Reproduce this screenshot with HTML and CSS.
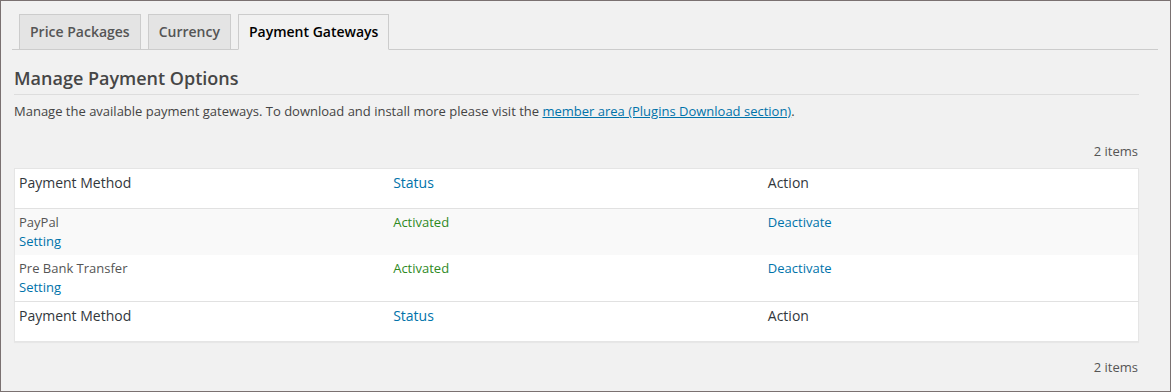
FILE: index.html
```html
<!DOCTYPE html>
<html lang="en">
<head>
    <meta charset="UTF-8">
    <meta name="viewport" content="width=device-width, initial-scale=1.0">
    <title>Payment Gateways</title>
    <link rel="stylesheet" href="styles.css">
</head>
<body>
    <div class="frame">
        <h2 class="nav-tab-wrapper">
            <a href="#" class="nav-tab">Price Packages</a>
            <a href="#" class="nav-tab">Currency</a>
            <a href="#" class="nav-tab nav-tab-active">Payment Gateways</a>
        </h2>

        <div class="wrap">
            <h3 class="section-title">Manage Payment Options</h3>
            <p class="description">Manage the available payment gateways. To download and install more please visit the <a href="#">member area (Plugins Download section)</a>.</p>

            <div class="tablenav">2 items</div>
            <table class="gateways">
                <thead>
                    <tr>
                        <th>Payment Method</th>
                        <th class="sortable">Status</th>
                        <th>Action</th>
                    </tr>
                </thead>
                <tbody>
                    <tr class="alternate">
                        <td>PayPal<br><a href="#">Setting</a></td>
                        <td class="active-status">Activated</td>
                        <td><a href="#">Deactivate</a></td>
                    </tr>
                    <tr>
                        <td>Pre Bank Transfer<br><a href="#">Setting</a></td>
                        <td class="active-status">Activated</td>
                        <td><a href="#">Deactivate</a></td>
                    </tr>
                </tbody>
                <tfoot>
                    <tr>
                        <th>Payment Method</th>
                        <th class="sortable">Status</th>
                        <th>Action</th>
                    </tr>
                </tfoot>
            </table>
            <div class="tablenav tablenav-bottom">2 items</div>
        </div>
    </div>
</body>
</html>
```

FILE: styles.css
```css
* {
    box-sizing: border-box;
}

html, body {
    margin: 0;
    padding: 0;
}

body {
    font-family: "Open Sans", Arial, sans-serif;
    font-size: 13px;
    line-height: 1.4em;
    color: #444;
    background-color: #f1f1f1;
}

.frame {
    height: 392px;
    border: 1px solid #7a7171;
    background-color: #f1f1f1;
    padding: 13px 12px 0 11px;
    overflow: hidden;
}

a {
    color: #0073aa;
}

.nav-tab-wrapper {
    margin: 0;
    padding: 0 0 0 7px;
    border-bottom: 1px solid #ccc;
    display: flex;
    gap: 7px;
    font-size: 14px;
    line-height: 24px;
    font-weight: 600;
}

.nav-tab {
    display: block;
    padding: 5px 10px;
    margin-bottom: -1px;
    border: 1px solid #ccc;
    background-color: #e4e4e4;
    color: #555;
    text-decoration: none;
}

.nav-tab-active {
    background-color: #f1f1f1;
    border-bottom-color: #f1f1f1;
    color: #000;
}

.wrap {
    margin: 0 19px 0 2px;
}

.section-title {
    margin: 16px 0 0 0;
    padding: 0 0 4px 0;
    font-size: 18px;
    line-height: 24px;
    font-weight: 600;
    color: #464646;
    border-bottom: 1px solid #ddd;
}

.description {
    margin: 6px 0 0 0;
    line-height: 20px;
}

.tablenav {
    text-align: right;
    color: #555;
    padding-right: 1px;
    margin-top: 20px;
    height: 27px;
    line-height: 20px;
}

.tablenav-bottom {
    margin-top: 15px;
}

.gateways {
    width: 100%;
    border-collapse: collapse;
    table-layout: fixed;
    background-color: #fff;
    border: 1px solid #e5e5e5;
    box-shadow: 0 1px 1px rgba(0, 0, 0, 0.04);
}

.gateways th {
    text-align: left;
    font-weight: 400;
    font-size: 14px;
    line-height: 20px;
    color: #32373c;
    padding: 4px 4px 15px 4px;
}

.gateways th.sortable {
    color: #0073aa;
}

.gateways thead tr {
    border-bottom: 1px solid #e1e1e1;
}

.gateways tfoot tr {
    border-top: 1px solid #e1e1e1;
}

.gateways td {
    vertical-align: top;
    padding: 4px 4px 4px 4px;
    color: #555;
    line-height: 19px;
}

.gateways td a {
    text-decoration: none;
}

.gateways tr.alternate {
    background-color: #f9f9f9;
}

.gateways td.active-status {
    color: #2f8a1f;
}
```
